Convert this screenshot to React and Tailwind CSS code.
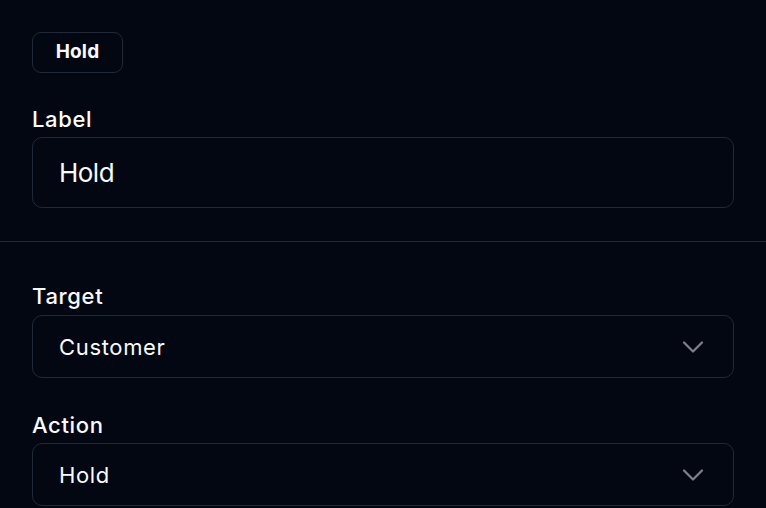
import React from "react";

function Chevron() {
  return (
    <svg width="36" height="36" viewBox="0 0 24 24" fill="none" stroke="#7b818c" strokeWidth="1.5" strokeLinecap="round" strokeLinejoin="round">
      <path d="m6 9 6 6 6-6" />
    </svg>
  );
}

function Select({ value }) {
  return (
    <div className="flex h-[63px] w-full items-center justify-between rounded-[10px] border border-[#1f2937] pl-[26px] pr-[22px]">
      <span className="text-[22px] leading-none tracking-[0.03em]">{value}</span>
      <Chevron />
    </div>
  );
}

export default function App() {
  return (
    <div className="min-h-screen w-full bg-[#030712] font-['Inter',sans-serif] text-[#f9fafb]">
      <div className="px-[32px] pt-[32px] pb-[33px]">
        <div className="flex h-[41px] w-[91px] items-center justify-center rounded-[9px] border border-[#1f2937] text-[19px] font-bold tracking-[0.01em]">
          Hold
        </div>
        <div className="mt-[31px] text-[22px] font-medium leading-[30px] tracking-[0.03em]">Label</div>
        <div className="mt-[3px] flex h-[71px] w-full items-center rounded-[10px] border border-[#1f2937] px-[26px] text-[26px] tracking-[-0.02em]">
          Hold
        </div>
      </div>
      <div className="h-px w-full bg-[#1f2937]" />
      <div className="px-[32px] pt-[39px]">
        <div className="text-[22px] font-medium leading-[30px] tracking-[0.03em]">Target</div>
        <div className="mt-[4px]">
          <Select value="Customer" />
        </div>
        <div className="mt-[32px] text-[22px] font-medium leading-[30px] tracking-[0.03em]">Action</div>
        <div className="mt-[3px]">
          <Select value="Hold" />
        </div>
      </div>
    </div>
  );
}
